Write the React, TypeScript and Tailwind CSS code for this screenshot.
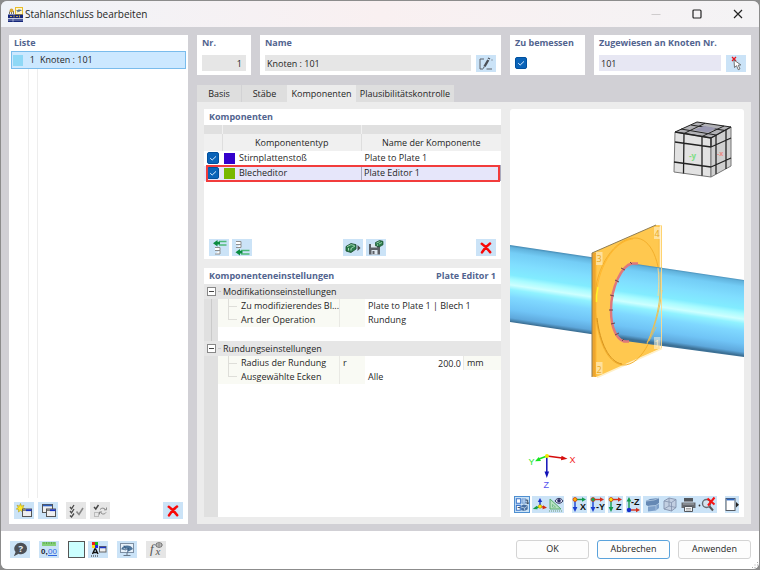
import { ReactNode } from 'react';

const tools = 'h-[17px] w-5 flex-shrink-0 flex items-center justify-center';
const blue = 'bg-[#cbe3f7]';
const heading = 'text-[9px] leading-4 font-bold text-[#52648f]';

function IconButton({ label, children, className = blue, disabled = false }: { label: string; children: ReactNode; className?: string; disabled?: boolean }) {
  return (
    <button type="button" aria-label={label} disabled={disabled} className={`${tools} ${className}`}>
      {children}
    </button>
  );
}

function Check({ label, id }: { label: string; id?: string }) {
  return (
    <span className="relative block h-3 w-3">
      <input id={id} type="checkbox" defaultChecked aria-label={label} className="peer block h-3 w-3 appearance-none rounded-[2px] border border-[#00509e] bg-white checked:bg-[#0a63b8]" />
      <svg viewBox="0 0 12 12" className="pointer-events-none absolute inset-0 hidden h-3 w-3 peer-checked:block" fill="none" stroke="#d8ecff">
        <path d="M3.2 6.2 5.2 8 9 4.4" />
      </svg>
    </span>
  );
}

// ---------- icons ----------

function AppIcon() {
  return (
    <svg width="15" height="15" viewBox="0 0 15 15">
      <rect x="7.5" y=".5" width="7" height="7" fill="#fff7c8" stroke="#e8bd2c" />
      <path d="M8.500 3.500h5M11 2v3M9 5l4-2" stroke="#56708c" strokeWidth=".9" />
      <circle cx="3.500" cy="3.500" r="1.900" fill="#d9a733" />
      <path d="M1.500 7V4.500M3.500 7V5M5.500 7V4" stroke="#7a7560" />
      <rect x="0" y="7.500" width="15" height="3.500" fill="#15267a" />
      <path d="M2 9.500h2M6 8.500v2M8 9.500h2M11.500 8.500v2" stroke="#e6c34c" strokeWidth=".8" />
      <rect x="0" y="11.800" width="15" height="3.200" fill="#15267a" />
      <path d="M0 13h15M5 11.800v3" stroke="#dfe5f5" strokeWidth=".6" />
    </svg>
  );
}

function RedCross() {
  return (
    <svg width="12" height="12" viewBox="0 0 12 12">
      <path d="M1.800 1.800c3 2 6 5.200 8.400 8.400M10 1.600C7 3.800 4 7 2 10.400" stroke="#f80808" strokeWidth="2.500" strokeLinecap="round" />
    </svg>
  );
}

function EditIcon() {
  return (
    <svg width="16" height="14" viewBox="0 0 16 14" fill="none" stroke="#5c6168">
      <path d="M6 2H2v10h3M8.500 12H14" />
      <path d="m6.500 9.500 3.800-6.500" stroke="#4b5058" strokeWidth="2.400" />
      <path d="m10.700 2 .6-1" stroke="#4b5058" strokeWidth="2.400" />
      <path d="m5.500 11.500.6-1.800" stroke="#4b5058" />
      <path d="M13.500 3h1.500" strokeDasharray="1 1" />
    </svg>
  );
}

function PickIcon() {
  return (
    <svg width="14" height="15" viewBox="0 0 14 15">
      <path d="m3 1 4 4M7 1 3 5" stroke="#e8141c" strokeWidth="1.300" />
      <path d="m5 4 .5 7.500 2-1.800 1.800 4 1.700-.8-1.800-3.700 2.600-.3Z" fill="#fff" stroke="#555" strokeWidth=".8" />
    </svg>
  );
}

function NewWindowIcon({ star }: { star?: boolean }) {
  return (
    <svg width="17" height="15" viewBox="0 0 17 15">
      {star ? (
        <path d="m4.500.5 1 2.700 2.500-1-1.200 2.400L9 6 6.400 6.600 6.500 9 4.500 7.300 2.500 9l.1-2.600L.3 6l2-1.400L1 2.200l2.500 1Z" fill="#ffe92c" stroke="#b29a12" strokeWidth=".6" />
      ) : (
        <g>
          <rect x="2.500" y="1.500" width="10" height="8" fill="#eee" stroke="#555" />
          <path d="M3 2.500h9" stroke="#2a5fc0" strokeWidth="1.600" />
        </g>
      )}
      <rect x="6.500" y="6" width="9" height="7.500" fill="#eeeeef" stroke="#555" />
      <path d="M10 7.200h5.500" stroke="#1733c6" strokeWidth="1.800" />
      <path d="M7 7.200h3" stroke="#777" strokeWidth="1.500" />
    </svg>
  );
}

function ChecksIcon({ swap }: { swap?: boolean }) {
  return (
    <svg width="16" height="14" viewBox="0 0 16 14" fill="none" stroke="#777">
      {swap ? (
        <g>
          <path d="M2 3 3.800 5 6.500 1" stroke="#444" strokeWidth="1.400" />
          <rect x="2.500" y="8.500" width="4" height="4" stroke="#bbb" />
          <path d="M8 5.500c1.500-1.800 4-1.800 5.500 0M14.500 3.500v2.300h-2.500M14 8.500c-1.500 2-4 2-5.500 0M7.500 10.500V8H10" stroke="#888" />
        </g>
      ) : (
        <g>
          <path d="M2 3 3.500 4.800 6 1M2 7 3.500 8.800 6 5M2 11.500 3.500 13 6 9.500" stroke="#4a4a4a" strokeWidth="1.300" />
          <path d="m8.500 7.500 2.500 3 4-6.500" stroke="#888" strokeWidth="1.600" />
        </g>
      )}
    </svg>
  );
}

function InsertIcon({ below }: { below?: boolean }) {
  return (
    <svg width="16" height="16" viewBox="0 0 16 16" fill="none">
      {below ? (
        <g>
          <path d="M2 1.500h5v3H2M7 4.500v3H2" fill="#fff" stroke="#8e8e8e" />
          <path d="M15.500 10.500H7M15.500 14H7" stroke="#4dba78" strokeWidth="1.300" />
          <path d="M1.500 12.200 6 9v1.800h2.500v2.800H6v1.900Z" fill="#0b8c40" />
        </g>
      ) : (
        <g>
          <path d="M4 7.500h5v3H4M9 10.500v3.500H4" fill="#fff" stroke="#8e8e8e" />
          <path d="M15.500 1.500H8M15.500 5H8" stroke="#4dba78" strokeWidth="1.300" />
          <path d="M2 3.200 6.500 0v1.800H9v2.800H6.500v1.900Z" fill="#0b8c40" />
        </g>
      )}
    </svg>
  );
}

function BlockIcon() {
  return (
    <svg width="16" height="14" viewBox="0 0 16 14">
      <path d="m1 5.500 5-3 5 1.200V8l-5 3.500L1 10Z" fill="#2c7d4c" stroke="#174a2b" strokeWidth=".8" />
      <path d="m2 5.700 4-2 3.500.8M6 7.500l4-2.500" stroke="#a7dcb8" strokeWidth=".9" fill="none" />
      <path d="M3.500 7v2.500M6 7.500v2" stroke="#bde6c9" strokeWidth=".9" />
      <path d="m12.500 4 3 3-3 3Z" fill="#444" />
    </svg>
  );
}

function SaveBlockIcon() {
  return (
    <svg width="17" height="15" viewBox="0 0 17 15">
      <path d="M2 4h9l2 2v8.500H2Z" fill="#5c6066" />
      <path d="M4 4h6v3.500H4ZM4.500 10h6v4.500h-6Z" fill="#dfe8f0" />
      <path d="M5.500 11h2v3h-2Z" fill="#5c6066" />
      <path d="m8.500 2.500 4-2 3.500.8v3.500l-3.500 2L8.500 5.800Z" fill="#2c7d4c" stroke="#174a2b" strokeWidth=".7" />
      <path d="m9.500 3 3.200-1.400M12 4l3-1.500M10.500 4.300v1.500" stroke="#b4e0c2" strokeWidth=".8" />
    </svg>
  );
}

function HelpIcon() {
  return (
    <svg width="15" height="15" viewBox="0 0 14 14">
      <path d="M7.500.8a5.600 5.300 0 0 1 0 10.600c-.8 0-1.600-.1-2.300-.5L.8 13.300l1.600-4A5.600 5.300 0 0 1 7.500.8Z" fill="#4c5057" />
      <text x="5.200" y="9.300" fontSize="9" fontWeight="700" fill="#e6f1fb" fontFamily="Open Sans, sans-serif">?</text>
    </svg>
  );
}

function UnitsIcon() {
  return (
    <svg width="18" height="16" viewBox="0 0 18 16">
      <rect x="2" y="1" width="14" height="4" fill="#84cf78" />
      <path d="M4 1v2M6.500 1v2M9 1v2M11.500 1v2M14 1v2" stroke="#4d9943" strokeWidth=".7" />
      <text x="1" y="13" fontSize="8" fontWeight="700" fill="#1c2430" fontFamily="Liberation Sans, sans-serif">0,</text>
      <text x="8" y="13" fontSize="8" fill="#2c66df" fontFamily="Liberation Sans, sans-serif">00</text>
      <path d="M8 14.500h9" stroke="#2c66df" />
    </svg>
  );
}

function DisplayIcon() {
  return (
    <svg width="17" height="16" viewBox="0 0 17 16">
      <path d="M2 1h3v3H2Z" fill="#f01c1c" />
      <path d="M5 1h3v3H5Z" fill="#18b818" />
      <path d="M2 4h3v3H2Z" fill="#ffdd10" />
      <path d="M5 4h3v3H5Z" fill="#1e2ce0" />
      <path d="M2.500 13 4.800 8h.8L8 13M3.500 11.500h3.500" stroke="#111" strokeWidth="1.400" fill="none" />
      <path d="M1 15h8" stroke="#222" strokeDasharray="1 1" />
      <rect x="9.500" y="5.500" width="6.500" height="5.500" fill="#eee" stroke="#666" />
      <path d="M10 6.500h6" stroke="#1733c6" strokeWidth="1.500" />
    </svg>
  );
}

function MonitorIcon() {
  return (
    <svg width="16" height="15" viewBox="0 0 16 15">
      <rect x="1.500" y="1.500" width="13" height="9" fill="#e7f1fa" stroke="#7d8fa3" />
      <path d="M2 7.500a6.500 6 0 0 1 12-.5L9.500 9.500 7 6Z" fill="#4f769c" />
      <path d="m8.500 10.500 1-4.500M3 7l4 1M5 3.500 7.500 8" stroke="#33567a" strokeWidth=".8" />
      <path d="M8 11v2M4.500 13.500h7" stroke="#68788a" />
    </svg>
  );
}

function FormulaIcon() {
  return (
    <svg width="16" height="16" viewBox="0 0 16 16">
      <text x="2" y="12" fontSize="13" fontStyle="italic" fill="#555" fontFamily="Liberation Serif, serif">f</text>
      <text x="7.500" y="14" fontSize="11" fontStyle="italic" fill="#555" fontFamily="Liberation Serif, serif">x</text>
      <ellipse cx="11" cy="4" rx="3.200" ry="2.300" fill="none" stroke="#666" />
      <path d="M8 4h6M11 2v4.500" stroke="#777" strokeWidth=".8" />
    </svg>
  );
}

function AxisIcon({ name, right, down, up }: { name: string; right: string; down: string; up?: boolean }) {
  return (
    <svg width="15" height="17" viewBox="0 0 15 17">
      {up ? (
        <g>
          <path d="M3 14V5" stroke={down} strokeWidth="1.400" />
          <path d="M3 1 .6 5.500h4.800Z" fill={down} />
          <path d="M4 14h7" stroke={right} strokeWidth="1.400" />
          <path d="m14 14-4-2.300v4.600Z" fill={right} />
          <circle cx="3" cy="14" r="2.200" fill="#1530cc" />
          <text x="5" y="9" fontSize="9" fontWeight="700" fill="#111" fontFamily="Liberation Sans, sans-serif">{name}</text>
        </g>
      ) : (
        <g>
          <path d="M3 3.500v8" stroke={down} strokeWidth="1.400" />
          <path d="M3 16 .6 11h4.800Z" fill={down} />
          <path d="M4 3.500h7" stroke={right} strokeWidth="1.400" />
          <path d="m14 3.500-4-2.300v4.600Z" fill={right} />
          <circle cx="3" cy="3.500" r="2" fill={name === 'Z' ? '#ffe600' : name === 'X' ? '#ffb000' : '#12a650'} stroke="#c93b18" strokeWidth=".8" />
          <text x={name.length > 1 ? 6 : 8} y="14" fontSize="9" fontWeight="700" fill="#111" fontFamily="Liberation Sans, sans-serif">{name}</text>
        </g>
      )}
    </svg>
  );
}

function ViewToggleIcon() {
  return (
    <svg width="14" height="15" viewBox="0 0 16 17">
      <path d="M1.500 2h5v5h-5zM1.500 9.500h4.500v5.500h-4.500z" fill="#fff" stroke="#3973c9" strokeWidth="1.200" />
      <path d="M8 2h4.500v5H8z" fill="#a9c8ec" stroke="#6b94c8" strokeWidth=".8" />
      <path d="m7 10 3-1.500 4.500 1v4.500L11 16l-4-1Z" fill="#476fa2" />
      <path d="m7 11.500 4 1v3M11 12.500l3-2" stroke="#d4e4f4" strokeWidth=".8" fill="none" />
      <path d="M12 3.500h2.500v4M12.500 6 14.500 8l1.500-2M3 12h3" stroke="#26384e" fill="none" />
    </svg>
  );
}

function OriginIcon() {
  return (
    <svg width="16" height="17" viewBox="0 0 16 17">
      <path d="M8 10V5" stroke="#1933c8" strokeWidth="1.400" />
      <path d="M8 2 5.800 6h4.400Z" fill="#1933c8" />
      <path d="m8 10.500-5 1.700" stroke="#139c4c" strokeWidth="1.400" />
      <path d="m.8 13 4-3.300.8 3.500Z" fill="#139c4c" />
      <path d="m8 10.500 4 .6" stroke="#d52c12" strokeWidth="1.400" />
      <path d="m15 11.800-4-2.600-.5 4Z" fill="#d52c12" />
      <circle cx="8" cy="10.500" r="1.800" fill="#ffe900" stroke="#a58c00" strokeWidth=".5" />
    </svg>
  );
}

function MeasureIcon() {
  return (
    <svg width="16" height="17" viewBox="0 0 16 17">
      <path d="M2 3v10h11Z" fill="#b9e3c2" stroke="#58ad6e" />
      <path d="M4.500 8.500V11h3Z" fill="#e8f5ff" stroke="#58ad6e" strokeWidth=".7" />
      <path d="M1 15h13" stroke="#6f9b78" strokeDasharray="1 1" />
      <path d="M7 5c2-3.500 6-3.500 8 0-2 3-6 3-8 0Z" fill="#dce0f4" stroke="#24264d" strokeWidth=".9" />
      <circle cx="11" cy="4.700" r="1.800" fill="#292966" />
    </svg>
  );
}

function SolidIcon() {
  return (
    <svg width="17" height="17" viewBox="0 0 17 17">
      <path d="m2 5 4-2 9-1v5l-3 2-8 1-2-1Z" fill="#6588b4" />
      <path d="m2 5 8-1 5-2" stroke="#a6bfdb" fill="none" />
      <path d="m4 10 8-1 3-1v4l-3 2.500-8 1Z" fill="#7d9fc9" />
      <path d="m4 10.500 8-1M12 9v5" stroke="#b7cfe7" strokeWidth=".7" />
    </svg>
  );
}

function WireIcon() {
  return (
    <svg width="16" height="17" viewBox="0 0 16 17">
      <path d="m2 5 5-3 7 1.500v8L9.500 15 2 13Z" fill="#c2cfe2" stroke="#8392ad" strokeWidth=".9" />
      <path d="M2 5 9.500 6.500 14 3.500M9.500 6.500V15M7 2v8l7 1.500M7 10l-5 3" stroke="#8392ad" strokeWidth=".8" fill="none" />
    </svg>
  );
}

function PrinterIcon() {
  return (
    <svg width="17" height="17" viewBox="0 0 17 17">
      <path d="M4 2h9v4H4Z" fill="#52565c" />
      <path d="M1.500 6.500h14v5.500h-14Z" fill="#666a70" />
      <path d="M3 8h11M4 5.700h9" stroke="#b9bdc3" strokeWidth=".8" />
      <path d="M4.500 10.500h8v5h-8Z" fill="#f4f6f8" stroke="#54585e" />
      <path d="M6 12.500h5M6 14h5" stroke="#888" strokeWidth=".7" />
    </svg>
  );
}

function ZoomResetIcon() {
  return (
    <svg width="18" height="17" viewBox="0 0 18 17">
      <circle cx="8.500" cy="7.500" r="4" fill="#d5e2ee" stroke="#666b73" strokeWidth="1.400" />
      <path d="m11.500 10.500 3.500 4" stroke="#555" strokeWidth="2" />
      <path d="m9.500 2.500 7 6M16.500 1.500l-6.500 8" stroke="#f51313" strokeWidth="2" />
      <circle cx="1.500" cy="9.500" r=".9" fill="#333" />
    </svg>
  );
}

function PanelIcon() {
  return (
    <svg width="14" height="17" viewBox="0 0 14 17">
      <rect x="1" y="2.500" width="9" height="12" fill="#fff" stroke="#555b63" />
      <path d="M1.500 3.500h8" stroke="#2c68c4" strokeWidth="1.800" />
      <path d="m11 6 3 2.800-3 2.800Z" fill="#222" />
    </svg>
  );
}

// ---------- model view ----------

function Scene() {
  return (
    <svg viewBox="510 109 234 384" className="min-h-0 w-full flex-1" preserveAspectRatio="xMidYMid meet" fontFamily="Open Sans, sans-serif">
      <defs>
        <linearGradient id="pipe" gradientUnits="userSpaceOnUse" x1="510" y1="245" x2="499" y2="320">
          <stop offset="0" stopColor="#4388b2" />
          <stop offset=".03" stopColor="#61b2dc" />
          <stop offset=".1" stopColor="#74cdf6" />
          <stop offset=".25" stopColor="#80deff" />
          <stop offset=".39" stopColor="#82ecff" />
          <stop offset=".45" stopColor="#a8fbff" />
          <stop offset=".52" stopColor="#cdffff" />
          <stop offset=".58" stopColor="#90f2ff" />
          <stop offset=".68" stopColor="#7fd8ff" />
          <stop offset=".84" stopColor="#70c4f6" />
          <stop offset=".95" stopColor="#5ea8dc" />
          <stop offset="1" stopColor="#3c7095" />
        </linearGradient>
      </defs>

      <path d="m510 245 84 12.500v77L510 322Z" fill="url(#pipe)" />

      {/* end plate */}
      <path d="m592 253 64-28 6 .5V348l-64 29-6-.5Z" fill="#ffc84f" />
      <path d="M592 253h4v124l-4-.5Z" fill="#eda52e" />
      <path d="M592 377V253l64-28" fill="none" stroke="#8d7c55" strokeWidth="1" />
      <path d="M596 254v122" stroke="#ffb832" />
      <path d="M597 377.500 662 348.500" stroke="#fff0c9" strokeWidth="1.500" />
      <path d="M659 225v124" stroke="#f6ba47" strokeWidth=".8" />
      <path d="M660.500 225.500V348" stroke="#fff2d2" strokeWidth="1.500" />
      <path d="M635 238c-20 0-40 29-40 61 0 36 11 65 28 66 19 1 36-33 37-72 1-32-9-55-25-55Z" fill="none" stroke="#f0ab28" strokeWidth=".9" />
      <path d="M633 239c-20 2-36 30-37 60" fill="none" stroke="#ffb01e" strokeWidth=".7" />
      <path d="M597 318c3 25 12 44 25 46" fill="none" stroke="#cf8b17" strokeWidth=".9" />
      <path d="M598 287q-2 8-1.500 15" fill="none" stroke="#fff32c" strokeWidth="1.500" />

      <path d="m638 264.200 106 15.800v77l-115-15.500c-12 0-18-14-18-31 0-24 11-47 21-47Z" fill="url(#pipe)" />
      <path d="M638 263.500h-6c-10 2-21 23-21 47 0 18 6 29 13 31h5" fill="none" stroke="#e0787a" strokeWidth="2.400" />
      <path d="m630 262 2 2M621 268l4 2M615 280l4 2M610 295l4 1M609 310h4M611 324l4-1M615 335l4-2M622 341l2-2" stroke="#70434b" />
      <path d="M660 272c2 30-4 50-13 72M662 290c-2 20-8 40-15 53M656 327l-7 14" fill="none" stroke="#f2bd4b" strokeWidth=".9" />
      <path d="M658 268c1 8 1 18 0 28M661.500 268v80" fill="none" stroke="#ffd98b" strokeWidth=".9" />

      <g fill="#fff5dc" fillOpacity=".55">
        <rect x="596" y="252" width="6.500" height="13" />
        <rect x="654" y="227" width="6.500" height="12" />
        <rect x="596" y="362" width="6.500" height="12" />
        <rect x="654" y="337" width="6.500" height="12" />
      </g>
      <g fontSize="9" fill="#e9a91f">
        <text x="596.500" y="262">3</text>
        <text x="654.500" y="236.500">4</text>
        <text x="596.500" y="372.500">2</text>
        <text x="654.500" y="347" fill="#fff0c5">1</text>
      </g>

      {/* view cube */}
      <g stroke="#222" strokeWidth="1" strokeLinejoin="round">
        <path d="m675 132 22-10 34 5-20 11Z" fill="#b1b1b5" />
        <path d="m675 132 36 6v39l-37-5Z" fill="#e2e2e2" stroke="#777" />
        <path d="m711 138 20-11v39l-20 11Z" fill="#cfcfcf" stroke="#777" />
        <path d="m684 133.500-.5 40M702 136.500v39.300M675 142l36 5M674 162l37 5M716 135v39M726 130v39M711 147l20-9M711 167l20-9" fill="none" strokeWidth="1.300" />
        <path d="m675 132 36 6 20-11M711 138v9" fill="none" strokeWidth="1.300" />
        <path d="m684 133.500 21-10.300M702 136.500l22-10.500M681 129l35 6M691 125l34 5.500" fill="none" />
      </g>
      <path d="m694 130 10-4 12 2-8 4.500Z" fill="#9a99b2" />
      <text x="689" y="158.500" fontSize="8" fontWeight="700" fill="#7ede84">-y</text>
      <text x="717" y="156" fontSize="7" fontWeight="700" fill="#eb8d88">-x</text>

      {/* coordinate axes */}
      <path d="m547 456 15 2" stroke="#d50c0c" strokeWidth="1.500" />
      <path d="m567.500 458.800-6-3-.5 4.500Z" fill="#d50c0c" />
      <path d="m547 456-8 3" stroke="#15e51d" strokeWidth="1.500" />
      <path d="m535 461.300 6-.3-2.200-4Z" fill="#15e51d" />
      <path d="M546.800 457v15" stroke="#1212b8" strokeWidth="1.500" />
      <path d="m546.800 478-2.300-6.500h4.600Z" fill="#1212b8" />
      <circle cx="547" cy="456" r="2" fill="#f4e800" />
      <g fontSize="9" fontFamily="Liberation Sans, sans-serif">
        <text x="569.500" y="463" fill="#f22020">X</text>
        <text x="528.500" y="465" fill="#23e62b">Y</text>
        <text x="543.500" y="488" fill="#5454ee">Z</text>
      </g>
    </svg>
  );
}

// ---------- panels ----------

function ListPanel() {
  return (
    <section className="flex w-[179px] flex-shrink-0 flex-col bg-white">
      <h2 className={`${heading} px-[5px]`}>Liste</h2>
      <div className="flex flex-1 flex-col px-[2px]">
        <ul>
          <li className="flex h-[18px] items-center border border-[#7abcec] bg-[#cce8ff]">
            <span className="ml-px h-[11px] w-[10px] bg-[#8ed8f6]" />
            <span className="w-3 text-right">1</span>
            <span className="ml-[5px]">Knoten : 101</span>
          </li>
        </ul>
        <div className="flex flex-1">
          <div className="w-[18px] border-r border-[#ededed]" />
          <div className="w-[9px] border-r border-[#ededed]" />
        </div>
      </div>
      <div className="flex gap-1 px-[5px] pt-1 pb-[5px]">
        <IconButton label="Neu"><NewWindowIcon star /></IconButton>
        <IconButton label="Kopieren"><NewWindowIcon /></IconButton>
        <IconButton label="Alle auswählen" disabled className="ml-1 bg-[#e6e6e6]"><ChecksIcon /></IconButton>
        <IconButton label="Auswahl umkehren" disabled className="bg-[#e6e6e6]"><ChecksIcon swap /></IconButton>
        <IconButton label="Löschen" className="ml-auto bg-[#cbe3f7]"><RedCross /></IconButton>
      </div>
    </section>
  );
}

function HeaderRow() {
  return (
    <div className="flex h-10 gap-[9px]">
      <div className="w-[54px] bg-white px-[5px]">
        <label htmlFor="nr" className={`${heading} block`}>Nr.</label>
        <input id="nr" readOnly defaultValue="1" className="mt-1 block h-4 w-full bg-[#e6e6e6] px-1 text-right" />
      </div>
      <div className="min-w-0 flex-1 bg-white px-[5px]">
        <label htmlFor="name" className={`${heading} block`}>Name</label>
        <div className="mt-1 flex gap-[5px]">
          <input id="name" readOnly defaultValue="Knoten : 101" className="h-4 min-w-0 flex-1 bg-[#e6e6e6] px-[2px]" />
          <IconButton label="Name bearbeiten"><EditIcon /></IconButton>
        </div>
      </div>
      <div className="w-[75px] bg-white px-[5px]">
        <label htmlFor="design" className={`${heading} mb-[6px] block whitespace-nowrap`}>Zu bemessen</label>
        <Check id="design" label="Zu bemessen" />
      </div>
      <div className="w-[157px] bg-white px-[5px]">
        <label htmlFor="nodes" className={`${heading} block`}>Zugewiesen an Knoten Nr.</label>
        <div className="mt-1 flex gap-[5px]">
          <input id="nodes" defaultValue="101" className="h-4 min-w-0 flex-1 bg-[#e7e7f3] px-[2px]" />
          <IconButton label="Knoten auswählen"><PickIcon /></IconButton>
        </div>
      </div>
    </div>
  );
}

const components = [
  { type: 'Stirnplattenstoß', name: 'Plate to Plate 1', swatch: 'bg-[#3300cc]', selected: false },
  { type: 'Blecheditor', name: 'Plate Editor 1', swatch: 'bg-[#78b800]', selected: true },
];

function ComponentsPanel() {
  return (
    <section className="flex h-[150px] flex-col bg-white">
      <h2 className={`${heading} px-[5px]`}>Komponenten</h2>
      <table className="w-full table-fixed border-collapse">
        <colgroup>
          <col className="w-[18px]" />
          <col />
          <col className="w-[139px]" />
        </colgroup>
        <thead>
          <tr className="h-[9px] bg-[#e0e0e0]">
            <td className="border-r border-[#f0f0f0]" />
            <td className="border-r border-[#f0f0f0]" />
            <td />
          </tr>
          <tr className="h-[17px] bg-[#f0f0f0]">
            <th className="border-r border-[#dedede]" />
            <th className="border-r border-[#dedede] font-normal">Komponententyp</th>
            <th className="font-normal">Name der Komponente</th>
          </tr>
        </thead>
        <tbody>
          {components.map((c) => (
            <tr key={c.type} className={c.selected ? 'relative h-[14px] bg-[#e6e6fa]' : 'h-[14px]'}>
              <td className="p-0">
                <div className="flex h-[14px] items-center pl-[3px]"><Check label={c.type} /></div>
                {c.selected && <span className="pointer-events-none absolute -inset-y-px right-px left-[2px] border-2 border-[#f23c3c]" />}
              </td>
              <td className="p-0">
                <div className="flex h-[14px] items-center gap-1 pl-[2px]">
                  <span className={`h-[11px] w-[11px] ${c.swatch}`} />
                  {c.type}
                </div>
              </td>
              <td className={c.selected ? 'border border-[#a9a9bd] p-0 pl-[2px]' : 'p-0 pl-[3px]'}>{c.name}</td>
            </tr>
          ))}
        </tbody>
      </table>
      <div className="mt-auto flex gap-[3px] px-[5px] pb-[3px]">
        <IconButton label="Oberhalb einfügen"><InsertIcon /></IconButton>
        <IconButton label="Unterhalb einfügen"><InsertIcon below /></IconButton>
        <div className="flex-1" />
        <IconButton label="Komponente laden"><BlockIcon /></IconButton>
        <IconButton label="Komponente speichern"><SaveBlockIcon /></IconButton>
        <div className="flex-1" />
        <IconButton label="Komponente löschen"><RedCross /></IconButton>
      </div>
    </section>
  );
}

const groups = [
  {
    title: 'Modifikationseinstellungen',
    rows: [
      { label: 'Zu modifizierendes Bl...', symbol: '', value: 'Plate to Plate 1 | Blech 1', unit: '' },
      { label: 'Art der Operation', symbol: '', value: 'Rundung', unit: '' },
    ],
  },
  {
    title: 'Rundungseinstellungen',
    rows: [
      { label: 'Radius der Rundung', symbol: 'r', value: '200.0', unit: 'mm' },
      { label: 'Ausgewählte Ecken', symbol: '', value: 'Alle', unit: '' },
    ],
  },
];

function SettingsPanel() {
  return (
    <section className="flex min-h-0 flex-1 flex-col bg-white">
      <div className={`${heading} flex justify-between px-[5px]`}>
        <h2>Komponenteneinstellungen</h2>
        <span>Plate Editor 1</span>
      </div>
      {groups.map((g, n) => (
        <div key={g.title}>
          <div className="flex h-[15px] items-center bg-[#e6e6e6]">
            <button type="button" aria-label={g.title} className="ml-[3px] flex h-[9px] w-[9px] items-center justify-center border border-[#888] bg-white">
              <span className="h-px w-[5px] bg-[#444]" />
            </button>
            <span className="ml-[2px] h-px w-[3px] bg-[#c8c8c8]" />
            <span className="ml-[2px]">{g.title}</span>
          </div>
          <div className="flex">
            <div className="w-[14px] bg-[#e0e0e0]">
              {n < groups.length - 1 && <div className="ml-[7px] h-full w-px bg-[#cacaca]" />}
            </div>
            <div className="min-w-0 flex-1 pb-[14px]">
              {g.rows.map((r, i) => (
                <div key={r.label} className="flex h-[14px] items-center">
                  <div className="flex h-full w-[122px] flex-shrink-0 items-center border-r border-[#e9e9e4] bg-[#f9faf4] pl-[10px]">
                    <div className={i === g.rows.length - 1 ? 'mr-[4px] mb-[7px] h-[7px] w-[9px] flex-shrink-0 border-b border-l border-[#deded9]' : 'mr-[4px] flex h-full w-[9px] flex-shrink-0 items-center border-l border-[#deded9]'}>
                      <div className={i === g.rows.length - 1 ? 'hidden' : 'h-px w-full bg-[#deded9]'} />
                    </div>
                    <span className="whitespace-nowrap">{r.label}</span>
                  </div>
                  <div className="h-full w-[25px] flex-shrink-0 bg-[#f9faf4] pl-[3px] leading-[14px]">{r.symbol}</div>
                  {r.unit ? (
                    <>
                      <input aria-label={r.label} defaultValue={r.value} className="h-full min-w-0 flex-1 pr-[2px] text-right" />
                      <div className="h-full w-[38px] border-l border-[#e9e9e4] bg-[#f9faf4] pl-[3px] leading-[14px]">{r.unit}</div>
                    </>
                  ) : (
                    <div className="min-w-0 flex-1 pl-[3px]">{r.value}</div>
                  )}
                </div>
              ))}
            </div>
          </div>
        </div>
      ))}
      <div className="w-[14px] flex-1 bg-[#e0e0e0]" />
    </section>
  );
}

function ViewPanel() {
  const slot = 'h-[17px] flex items-center justify-center bg-[#cbe3f7]';
  return (
    <section className="flex min-w-0 flex-[234] flex-col overflow-hidden rounded-t-[3px] bg-white">
      <Scene />
      <div className="flex h-6 items-start pt-[3px] pr-[5px] pl-1">
        <button type="button" aria-label="Ansichten" className={`${slot} border border-[#4f8fd0]`}><ViewToggleIcon /></button>
        <div className="ml-[2px] flex">
          <button type="button" aria-label="Koordinatensystem" className={slot}><OriginIcon /></button>
          <button type="button" aria-label="Messen" className={slot}><MeasureIcon /></button>
        </div>
        <div className="ml-2 flex gap-[3px]">
          <button type="button" aria-label="Ansicht X" className={slot}><AxisIcon name="X" right="#149a4e" down="#1a3fd0" /></button>
          <button type="button" aria-label="Ansicht -Y" className={slot}><AxisIcon name="-Y" right="#d5301c" down="#1a3fd0" /></button>
          <button type="button" aria-label="Ansicht Z" className={slot}><AxisIcon name="Z" right="#d5301c" down="#149a4e" /></button>
          <button type="button" aria-label="Ansicht -Z" className={slot}><AxisIcon name="-Z" right="#d5301c" down="#149a4e" up /></button>
        </div>
        <div className="ml-[2px] flex">
          <button type="button" aria-label="Volumenmodell" className={`${slot} w-[18px]`}><SolidIcon /></button>
          <button type="button" aria-label="Drahtmodell" className={`${slot} w-[18px]`}><WireIcon /></button>
          <button type="button" aria-label="Drucken" className={`${slot} w-[18px]`}><PrinterIcon /></button>
          <button type="button" aria-label="Zoom zurücksetzen" className={`${slot} w-5`}><ZoomResetIcon /></button>
        </div>
        <button type="button" aria-label="Panel" className={`${slot} ml-auto`}><PanelIcon /></button>
      </div>
    </section>
  );
}

const tabs = [
  { label: 'Basis', className: 'w-[45px] bg-[#dedede] border-r border-[#d2d2d4]' },
  { label: 'Stäbe', className: 'w-[45px] bg-[#dedede]' },
  { label: 'Komponenten', className: 'w-[69px] bg-[#ececec]' },
  { label: 'Plausibilitätskontrolle', className: 'w-[98px] bg-[#dedede]' },
];

function Footer() {
  const action = 'h-[19px] w-[73px] rounded-[3px] border bg-[#fdfdfd]';
  return (
    <footer className="relative flex h-[38px] items-center bg-white pr-2 pb-[2px] pl-[9px]">
      <IconButton label="Hilfe"><HelpIcon /></IconButton>
      <IconButton label="Einheiten" className="ml-[9px] bg-[#cbe3f7]"><UnitsIcon /></IconButton>
      <button type="button" aria-label="Farbe" className="ml-[9px] h-[17px] w-[17px] border border-[#555] bg-[#ccffff]" />
      <IconButton label="Darstellung" className="ml-[3px] bg-[#cbe3f7]"><DisplayIcon /></IconButton>
      <IconButton label="Anzeige" className="ml-[9px] bg-[#cbe3f7]"><MonitorIcon /></IconButton>
      <IconButton label="Formel" disabled className="ml-[9px] bg-[#e6e6e6]"><FormulaIcon /></IconButton>
      <div className="ml-auto flex gap-2">
        <button type="button" className={`${action} border-[#d4d4d4]`}>OK</button>
        <button type="button" className={`${action} border-[#5ba3dc]`}>Abbrechen</button>
        <button type="button" className={`${action} border-[#d4d4d4]`}>Anwenden</button>
      </div>
      <svg width="7" height="7" viewBox="0 0 7 7" className="absolute right-0 bottom-0" fill="#aaa">
        <path d="M5 0h1v1H5zM5 2.500h1v1H5zM5 5h1v1H5zM2.500 2.500h1v1h-1zM2.500 5h1v1h-1zM0 5h1v1H0z" />
      </svg>
    </footer>
  );
}

function App() {
  return (
    <div className="h-screen bg-[#8c8c8c] p-px font-['Open_Sans','Noto_Sans',sans-serif] text-[9px] leading-[14px] text-[#1f1f1f]">
      <div className="flex h-full flex-col overflow-hidden rounded-[6px] bg-[#d1d0d5]">
        <header className="flex h-[26px] items-center bg-gradient-to-r from-[#f0f3f8] via-[#f9f0f1] to-[#f4f3f5] pl-[7px]">
          <AppIcon />
          <h1 className="ml-[2px] text-[10px]">Stahlanschluss bearbeiten</h1>
          <div className="ml-auto flex items-center">
            <button type="button" aria-label="Minimieren" disabled className="flex w-[42px] justify-center">
              <svg width="10" height="10" viewBox="0 0 10 10" stroke="#cfcccd"><path d="M.5 5.500h9" /></svg>
            </button>
            <button type="button" aria-label="Maximieren" className="flex w-[40px] justify-center">
              <svg width="10" height="10" viewBox="0 0 10 10" fill="none" stroke="#222" strokeWidth="1.200"><rect x="1" y="1" width="8" height="8" rx="1" /></svg>
            </button>
            <button type="button" aria-label="Schließen" className="flex w-[42px] justify-center">
              <svg width="10" height="10" viewBox="0 0 10 10" stroke="#222" strokeWidth="1.200"><path d="m1 1 8 8M9 1 1 9" /></svg>
            </button>
          </div>
        </header>

        <main className="flex min-h-0 flex-1 gap-[9px] p-2 pb-[7px]">
          <ListPanel />
          <div className="flex min-w-0 flex-1 flex-col">
            <HeaderRow />
            <nav role="tablist" className="mt-[10px] flex">
              {tabs.map((t) => (
                <button key={t.label} type="button" role="tab" aria-selected={t.label === 'Komponenten'} className={`h-[17px] whitespace-nowrap ${t.className}`}>
                  {t.label}
                </button>
              ))}
            </nav>
            <div className="flex min-h-0 flex-1 gap-[9px] bg-[#ececec] p-[7px]">
              <div className="flex min-w-0 flex-[297] flex-col gap-[9px]">
                <ComponentsPanel />
                <SettingsPanel />
              </div>
              <ViewPanel />
            </div>
          </div>
        </main>

        <Footer />
      </div>
    </div>
  );
}

export default App;
